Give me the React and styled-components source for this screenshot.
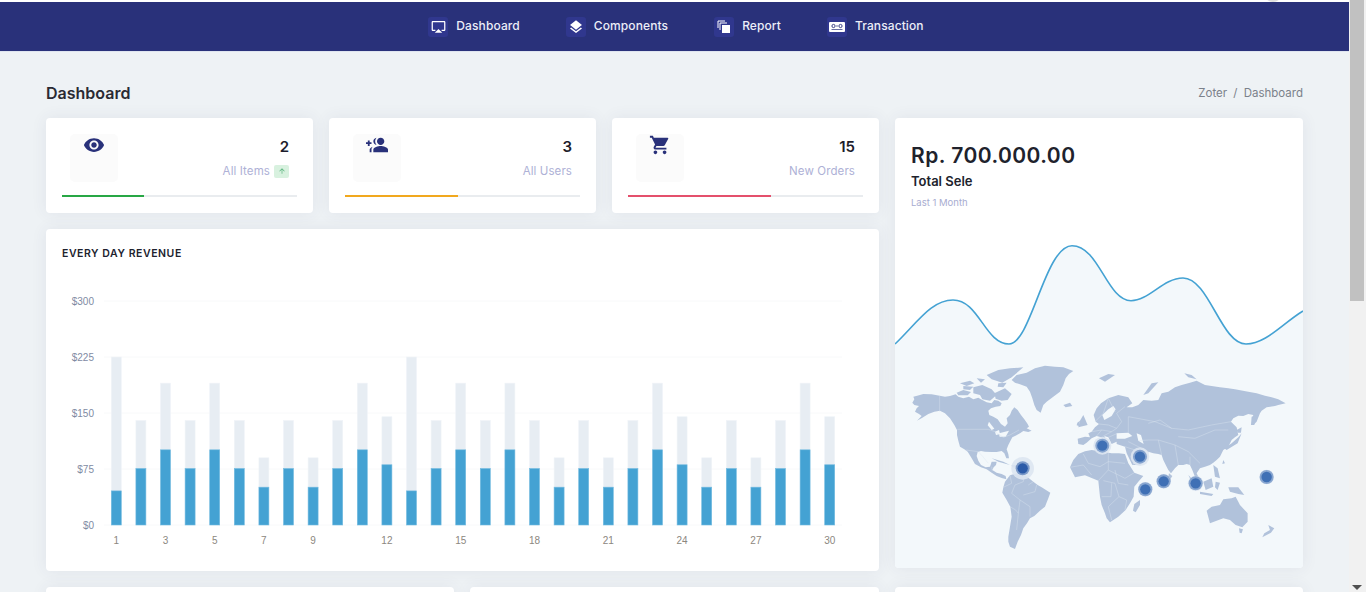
import React from 'react';
import styled, { createGlobalStyle } from 'styled-components';
import { MdAirplay, MdLayers, MdVisibility, MdGroupAdd, MdShoppingCart, MdArrowUpward } from 'react-icons/md';

const Global = createGlobalStyle`
  html, body { margin: 0; height: 592px; overflow: hidden; background: #fff; }
  * { box-sizing: border-box; }
  body { font-family: Inter, "Noto Sans", sans-serif; }
`;

const Shell = styled.div`display: flex; width: 1366px; height: 592px;`;
const Main = styled.div`width: 1349px; height: 592px; overflow: hidden; background: #eef2f5; display: flex; flex-direction: column;`;
const Scrollbar = styled.div`width: 17px; height: 592px; background: #f1f1f1; padding: 0 2px 0 1px; display: flex; flex-direction: column; justify-content: space-between; align-items: center;`;
const Thumb = styled.div`width: 14px; height: 301px; background: #c1c1c1;`;
const Arrow = styled.div`width: 0; height: 0; margin-bottom: 2px; border-left: 5px solid transparent; border-right: 5px solid transparent; border-top: 5px solid #505050;`;

const TopStrip = styled.div`height: 2px; background: #fff; position: relative; flex: none;`;
const Avatar = styled.div`position: absolute; left: 1264px; top: -16px; width: 18px; height: 18px; border-radius: 50%; background: #ddd;`;
const Header = styled.header`height: 50px; flex: none; background: #29317a; border-bottom: 1px solid #dfe5f0; display: flex; justify-content: center; align-items: center; gap: 46px; padding-left: 3px;`;
const NavItem = styled.div`display: flex; align-items: center; gap: 8px; color: #eceef8; font-size: 12px; font-weight: 500; letter-spacing: 0.1px;`;
const NavIcon = styled.span`width: 20px; height: 20px; border-radius: 3px; background: #30378e; color: #fff; display: flex; align-items: center; justify-content: center;`;
const NavLabel = styled.span`margin-top: -3px;`;

const Content = styled.div`padding: 0 46px;`;
const TitleRow = styled.div`height: 66px; padding-top: 16px; display: flex; justify-content: space-between; align-items: center;`;
const PageTitle = styled.h1`margin: 0; font-size: 16px; font-weight: 600; color: #2a2a33;`;
const Crumbs = styled.div`font-size: 11.5px; color: #7b818a; word-spacing: 3px;`;

const Grid = styled.div`display: grid; grid-template-columns: repeat(3, 267px) 408px; grid-template-rows: 95px 342px; gap: 16px;`;
const Card = styled.section`background: #fff; border-radius: 4px; box-shadow: 0 0 16px rgba(60, 70, 100, 0.08);`;
const StatCard = styled(Card)`padding: 16px;`;
const StatTop = styled.div`display: flex; justify-content: space-between; padding: 0 8px; height: 48px;`;
const Tile = styled.div`width: 48px; height: 48px; border-radius: 5px; background: #fbfbfb; color: #29317a; display: flex; justify-content: center; align-items: flex-start; font-size: 22px; line-height: 1; transform: ${p => (p.$flip ? 'scaleX(-1)' : 'none')};`;
const StatText = styled.div`text-align: right; padding-top: 1px;`;
const StatNumber = styled.div`font-size: 15px; line-height: 24px; font-weight: 600; color: #1d1d2c;`;
const StatLabel = styled.div`font-size: 11.5px; line-height: 24px; color: #aeb1d6; display: flex; align-items: center; justify-content: flex-end; gap: 4px; letter-spacing: 0.1px;`;
const Badge = styled.span`width: 15px; height: 13px; border-radius: 2px; background: #d8f1df; color: #55b27a; display: inline-flex; align-items: center; justify-content: center; font-size: 8px;`;
const Track = styled.div`height: 2px; margin-top: 13px; background: #e9ecef;`;
const Fill = styled.div`height: 100%; background: ${p => p.$color};`;

const ChartCard = styled(Card)`grid-column: 1 / span 3; padding-top: 18px; display: flex; flex-direction: column;`;
const ChartTitle = styled.h2`margin: 0 0 0 16px; font-size: 10.5px; line-height: 14px; font-weight: 600; letter-spacing: 0.55px; color: #20222e; text-transform: uppercase;`;
const ChartSvg = styled.svg`display: block; margin-top: 1px;`;

const SalesCard = styled(Card)`grid-column: 4; grid-row: 1 / span 2; height: 450px; overflow: hidden; display: flex; flex-direction: column;`;
const SalesHead = styled.div`height: 112px; padding: 24px 16px 0;`;
const SalesAmount = styled.div`font-size: 21px; line-height: 28px; font-weight: 600; letter-spacing: 0.45px; color: #20222c;`;
const SalesName = styled.div`font-size: 13px; line-height: 18px; margin-top: 2px; font-weight: 600; color: #20222c;`;
const SalesNote = styled.div`font-size: 9.5px; line-height: 12px; margin-top: 7px; color: #a8acd0;`;
const SalesSvg = styled.svg`display: block;`;

const BottomRow = styled.div`display: grid; grid-template-columns: 408px 409px 408px; gap: 16px; margin-top: 16px;`;
const BottomCard = styled(Card)`height: 60px;`;

const blue = [45,75,100,75,100,75,50,75,50,75,100,80,45,75,100,75,100,75,50,75,50,75,100,80,50,75,50,75,100,80];
const total = [225,140,190,140,190,140,90,140,90,140,190,145,225,140,190,140,190,140,90,140,90,140,190,145,90,140,90,140,190,145];
const xLabels = [1,3,5,7,9,12,15,18,21,24,27,30];
const yLabels = [[0,'$0'],[75,'$75'],[150,'$150'],[225,'$225'],[300,'$300']];
const yOf = v => 525 - v * (224 / 300);
const xOf = i => 111.3 + i * 24.6;

function Revenue() {
  return (
    <ChartSvg width="833" height="309" viewBox="46 262 833 309">
      {yLabels.map(([v, t]) => (
        <g key={t}>
          <line x1="104" x2="842" y1={yOf(v)} y2={yOf(v)} stroke="#f8f9fa" strokeWidth="1" />
          <text x="94" y={yOf(v) + 3.5} textAnchor="end" fontFamily="Liberation Sans" fontSize="10" fill="#7f8ba3">{t}</text>
        </g>
      ))}
      {blue.map((b, i) => (
        <g key={i}>
          <rect x={xOf(i)} y={yOf(total[i])} width="10" height={yOf(b) - yOf(total[i])} fill="#e7edf3" stroke="#f0f4f8" strokeWidth="0.6" />
          <rect x={xOf(i)} y={yOf(b) - 0.5} width="10" height={525 - yOf(b) + 0.5} fill="#44a2d3" stroke="#74bbe0" strokeWidth="0.6" />
        </g>
      ))}
      {xLabels.map(n => (
        <text key={n} x={xOf(n - 1) + 5} y="544" textAnchor="middle" fontFamily="Liberation Sans" fontSize="10" fill="#8c8780">{n}</text>
      ))}
    </ChartSvg>
  );
}

const land = [
  "52,158 58,148 55,140 72,136 85,132 110,133 134,137 150,140 165,138 182,133 190,140 205,145 222,140 235,148 250,143 262,150 275,157 290,160 298,150 310,152 320,160 316,168 302,170 288,175 280,182 283,195 295,200 308,208 318,222 330,230 338,220 335,205 345,195 350,182 358,172 368,180 378,195 388,208 398,222 402,230 395,235 410,242 400,246 385,243 375,250 360,258 352,262 345,275 340,285 335,298 340,312 342,325 334,325 328,310 320,303 305,306 290,306 270,305 258,303 248,306 245,318 250,332 258,345 272,352 285,350 290,335 305,335 303,345 296,352 292,360 305,368 320,372 332,378 334,388 320,384 305,378 290,368 275,358 258,352 240,342 230,325 218,305 208,298 195,290 190,272 186,255 186,240 178,225 165,205 150,190 135,182 118,185 100,192 82,203 66,212 80,198 72,192 60,185 65,175 72,168 58,165",
  "325,412 330,395 345,376 358,372 368,370 388,374 402,385 415,395 428,405 440,412 466,428 460,445 450,470 435,482 418,498 405,505 396,520 385,535 378,555 368,575 360,597 345,590 340,575 340,560 345,530 350,500 346,470 335,450 322,428",
  "350,90 365,75 395,68 420,55 450,47 480,50 505,52 535,63 522,72 512,85 505,105 495,125 475,140 455,155 445,165 437,188 425,180 418,165 412,145 405,125 395,110 375,103 360,98",
  "185,128 205,120 228,126 218,136 190,136", "195,100 225,92 238,100 215,108", "235,112 262,105 290,118 305,135 285,152 262,148 255,135 235,130",
  "275,75 310,60 345,55 385,52 350,82 322,98 290,88", "298,130 330,115 350,132 338,150 320,152 302,146", "245,85 270,88 258,98", "310,100 335,98 325,112 308,110", "205,108 235,110 225,120 205,118",
  "550,282 548,266 570,260 585,262 580,250 590,245 600,232 612,222 602,215 596,195 605,175 618,160 640,145 670,135 700,142 712,160 695,172 712,172 730,165 745,150 770,152 790,150 800,130 820,125 840,112 860,105 885,98 905,92 930,105 950,108 975,112 1000,115 1020,118 1060,125 1085,130 1110,137 1130,142 1150,148 1172,160 1150,165 1140,168 1115,172 1100,182 1095,190 1085,215 1075,225 1072,205 1075,195 1060,192 1045,198 1030,197 1015,205 1008,215 1025,232 1030,255 1020,262 1010,270 1000,290 985,300 975,320 965,330 955,338 945,345 930,350 915,355 905,370 912,385 918,398 905,388 900,380 892,360 885,345 875,342 865,345 850,345 840,355 828,370 820,360 815,350 805,330 800,315 790,312 775,310 760,305 758,325 745,338 735,345 712,345 695,310 690,290 665,282 665,275 650,282 640,262 628,258 636,275 618,262 605,258 590,265 575,278 565,285",
  "525,352 535,330 550,312 570,304 590,300 625,305 650,310 672,310 690,312 700,340 718,368 745,378 730,395 718,410 716,440 705,460 692,480 670,500 645,517 635,505 630,490 620,465 615,440 610,392 590,384 570,376 540,382",
  "935,482 950,470 975,465 985,448 1010,445 1022,440 1030,455 1035,465 1058,490 1058,515 1042,532 1022,525 1005,510 985,505 945,520",
  "1120,525 1138,535 1128,548 1102,562 1108,550 1125,540", "735,450 735,465 722,487 714,482 718,462",
  "290,325 325,335 345,345 310,335", "350,345 372,345 368,355 352,352", "505,165 525,158 532,168 512,172",
  "612,85 640,72 660,75 630,95", "745,135 770,100 790,97 760,130", "868,70 890,75 905,88 880,82",
  "555,212 565,195 578,225 550,232", "547,218 555,212 552,228 545,226", "1070,200 1085,195 1078,225 1068,225",
  "1030,262 1040,250 1028,280 995,300 988,295 1010,280", "1025,240 1040,232 1038,248 1028,248",
  "880,375 900,395 915,420 895,405", "915,425 955,432 950,438 915,432", "925,395 950,385 955,410 932,420",
  "962,395 975,398 968,420 960,412", "955,345 968,355 975,385 960,380", "985,330 990,340 982,342",
  "1000,412 1030,412 1048,435 1030,432 1005,425", "1032,535 1044,538 1040,550 1034,548", "822,370 832,378 826,388 820,380",
];
const water = [
  "725,250 738,255 746,282 730,272", "665,250 700,248 712,258 690,266 665,266", "640,178 655,168 662,178 650,198 628,210 622,195",
  "282,215 298,236 290,240 278,226", "312,250 342,242 332,260 314,260", "745,298 758,305 762,315 750,312", "300,245 312,240 315,252 303,255",
];
const borders = [
  "134,137 134,185", "187,238 280,238 300,245 325,262 345,255 372,240", "212,300 250,305 262,318 280,340", "290,350 292,362",
  "345,376 350,400 325,412", "388,374 385,395 360,405 350,430 375,450 405,470 405,500", "375,450 370,490 365,540", "345,470 362,480 370,490",
  "415,395 400,405", "425,405 420,425 385,435",
  "525,352 565,345 590,375", "565,312 580,340 615,350 640,335 690,340", "640,305 640,360 610,392", "640,360 690,385 718,368", "625,392 660,400 672,440 640,470 650,510",
  "672,440 695,450 690,480", "650,400 648,440 620,440", "660,360 670,400 700,405",
  "612,222 640,225 665,235 680,215 665,190 690,170", "590,245 620,240 650,245 665,235", "605,258 620,240", "625,258 650,245", "640,262 668,250",
  "700,248 700,200 780,215 830,235 880,240 950,225 1008,215", "760,220 795,210 830,235", "700,275 730,290 760,305", "730,272 760,270 790,270 840,285 880,305 915,340",
  "790,270 800,315", "840,285 850,345", "850,260 900,265 960,240 1000,240", "690,290 720,300", "712,345 740,320", "885,345 885,320",
  "600,215 625,190 640,145", "640,145 660,185",
];
const markers = [
  [383, 355, '#2c5ba8', 34], [622, 287, '#3f70b5', 27], [735, 320, '#3f70b5', 28], [751, 418, '#3f70b5', 22],
  [806, 394, '#3f70b5', 22], [902, 400, '#3f70b5', 23], [1115, 381, '#3f70b5', 22],
];

const curve = "M0,114 C22,93 36,70 58,70 C84,70 90,114 114,114 C136,114 150,15.7 177,15.7 C204,15.7 212,70.7 236,70.7 C254,70.7 268,48 288,48 C314,48 326,114 351,114 C371,114 388,93 408,81";

function Sales() {
  return (
    <SalesSvg width="408" height="338" viewBox="0 0 408 338">
      <path fill="#f3f8fb" d={`${curve} L408,338 L0,338 Z`} />
      <path fill="none" stroke="#44a2d3" strokeWidth="1.6" d={curve} />
      <g transform="translate(0,120) scale(0.3333)">
        {land.map((p, i) => <polygon key={i} points={p} fill="#b1c2db" />)}
        {water.map((p, i) => <polygon key={i} points={p} fill="#f3f8fb" />)}
        {borders.map((p, i) => <polyline key={i} points={p} fill="none" stroke="#dce5f1" strokeWidth="1.2" />)}
        {markers.map(([x, y, c, r]) => (
          <g key={x}>
            <circle cx={x} cy={y} r={r} fill="#dde5f1" opacity="0.9" />
            <circle cx={x} cy={y} r="21" fill={c} opacity="0.55" />
            <circle cx={x} cy={y} r="15.5" fill={c} />
          </g>
        ))}
      </g>
    </SalesSvg>
  );
}

const ReportIcon = () => (
  <svg width="14" height="14" viewBox="0 0 14 14">
    <path fill="none" stroke="#fff" strokeWidth="1" d="M1 8V1h7M3 10V3h7" />
    <rect x="5" y="5" width="8" height="8" fill="#fff" />
  </svg>
);
const TransactionIcon = () => (
  <svg width="16" height="12" viewBox="0 0 16 12">
    <rect x="0" y="1" width="16" height="10" rx="1" fill="#fff" />
    <circle cx="4.5" cy="5" r="1.6" fill="none" stroke="#29317a" strokeWidth="0.9" />
    <circle cx="11.5" cy="5" r="1.6" fill="none" stroke="#29317a" strokeWidth="0.9" />
    <path d="M7 5h2M2.5 8.5h11" stroke="#29317a" strokeWidth="0.7" />
  </svg>
);

const nav = [
  ['Dashboard', <MdAirplay size={15} />], ['Components', <MdLayers size={16} />],
  ['Report', <ReportIcon />], ['Transaction', <TransactionIcon />],
];
const stats = [
  { n: '2', label: 'All Items', icon: <MdVisibility />, color: '#28a745', pct: 35, badge: true },
  { n: '3', label: 'All Users', icon: <MdGroupAdd />, color: '#f1a81e', pct: 48, flip: true },
  { n: '15', label: 'New Orders', icon: <MdShoppingCart />, color: '#e4506c', pct: 61 },
];

export default function App() {
  return (
    <Shell>
      <Global />
      <Main>
        <TopStrip><Avatar /></TopStrip>
        <Header>
          {nav.map(([t, i]) => <NavItem key={t}><NavIcon>{i}</NavIcon><NavLabel>{t}</NavLabel></NavItem>)}
        </Header>
        <Content>
          <TitleRow>
            <PageTitle>Dashboard</PageTitle>
            <Crumbs>Zoter / Dashboard</Crumbs>
          </TitleRow>
          <Grid>
            {stats.map(s => (
              <StatCard key={s.label}>
                <StatTop>
                  <Tile $flip={s.flip}>{s.icon}</Tile>
                  <StatText>
                    <StatNumber>{s.n}</StatNumber>
                    <StatLabel>{s.label}{s.badge && <Badge><MdArrowUpward /></Badge>}</StatLabel>
                  </StatText>
                </StatTop>
                <Track><Fill $color={s.color} style={{ width: `${s.pct}%` }} /></Track>
              </StatCard>
            ))}
            <SalesCard>
              <SalesHead>
                <SalesAmount>Rp. 700.000.00</SalesAmount>
                <SalesName>Total Sele</SalesName>
                <SalesNote>Last 1 Month</SalesNote>
              </SalesHead>
              <Sales />
            </SalesCard>
            <ChartCard>
              <ChartTitle>Every Day Revenue</ChartTitle>
              <Revenue />
            </ChartCard>
          </Grid>
          <BottomRow>
            <BottomCard /><BottomCard /><BottomCard />
          </BottomRow>
        </Content>
      </Main>
      <Scrollbar><Thumb /><Arrow /></Scrollbar>
    </Shell>
  );
}
